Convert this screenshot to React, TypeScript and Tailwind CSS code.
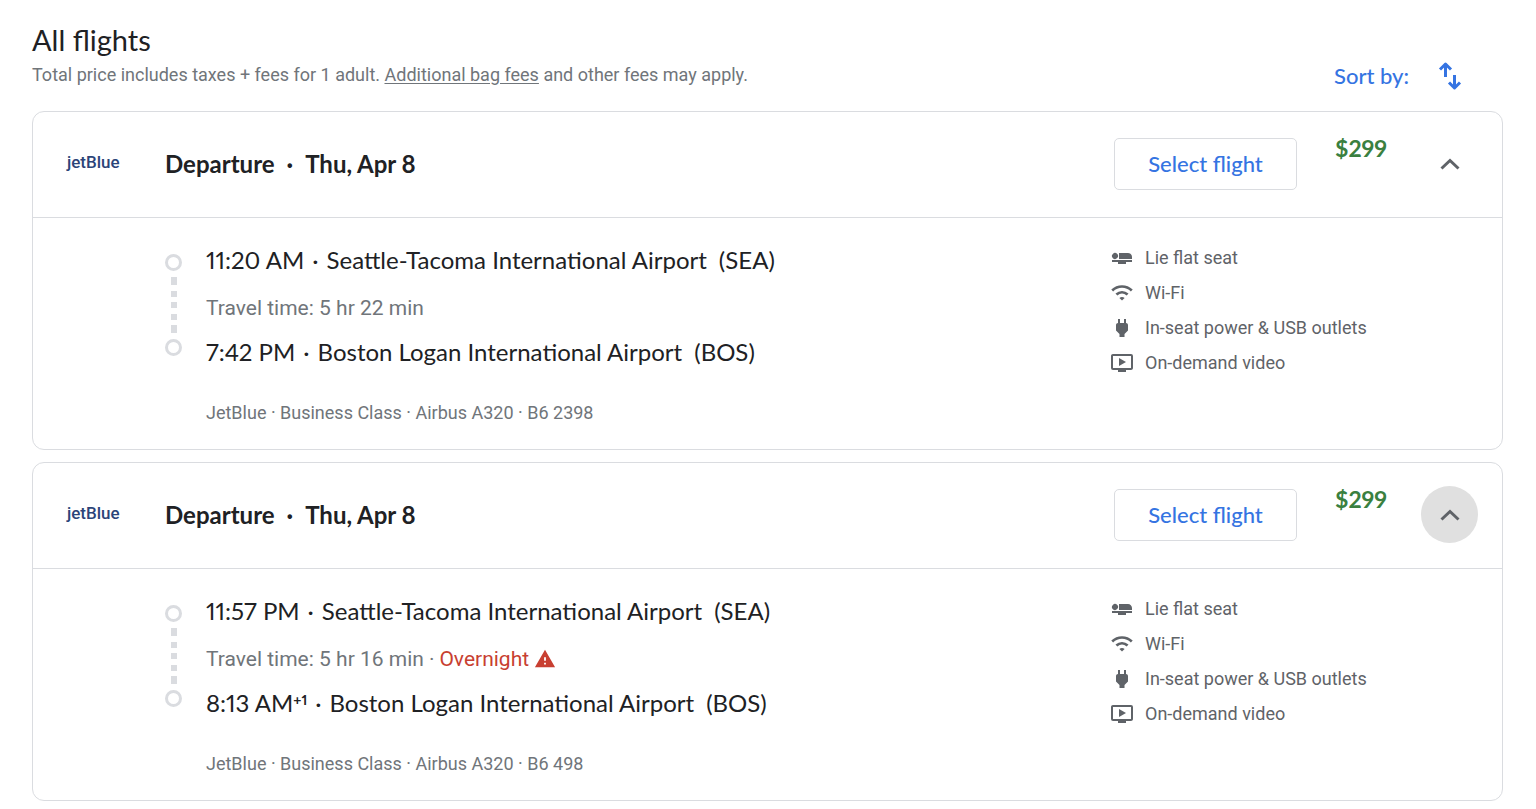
import { useState } from 'react';
import { MdAirlineSeatFlat, MdOndemandVideo, MdPower, MdWarning } from 'react-icons/md';

type Stop = {
  time: string;
  plusDays?: string;
  airport: string;
  code: string;
};

type Flight = {
  id: string;
  date: string;
  price: string;
  from: Stop;
  to: Stop;
  duration: string;
  overnight?: boolean;
  details: string;
};

const flights: Flight[] = [
  {
    id: 'b6-2398',
    date: 'Thu, Apr 8',
    price: '$299',
    from: { time: '11:20 AM', airport: 'Seattle-Tacoma International Airport', code: 'SEA' },
    to: { time: '7:42 PM', airport: 'Boston Logan International Airport', code: 'BOS' },
    duration: '5 hr 22 min',
    details: 'JetBlue · Business Class · Airbus A320 · B6 2398'
  },
  {
    id: 'b6-498',
    date: 'Thu, Apr 8',
    price: '$299',
    from: { time: '11:57 PM', airport: 'Seattle-Tacoma International Airport', code: 'SEA' },
    to: { time: '8:13 AM', plusDays: '+1', airport: 'Boston Logan International Airport', code: 'BOS' },
    duration: '5 hr 16 min',
    overnight: true,
    details: 'JetBlue · Business Class · Airbus A320 · B6 498'
  }
];

const amenities = [
  { icon: <MdAirlineSeatFlat size={24} />, label: 'Lie flat seat' },
  { icon: <WifiIcon />, label: 'Wi-Fi' },
  { icon: <MdPower size={24} />, label: 'In-seat power & USB outlets' },
  { icon: <MdOndemandVideo size={24} />, label: 'On-demand video' }
];

function WifiIcon() {
  return (
    <svg width="24" height="24" viewBox="0 0 24 24" fill="none" stroke="currentColor">
      <path d="M2.2 9.4C7.8 4.2 16.2 4.2 21.8 9.4" strokeWidth="2.7" />
      <path d="M6.4 13.6C9.7 10.6 14.3 10.6 17.6 13.6" strokeWidth="2.7" />
      <path d="M9.4 16.9C10.9 15.6 13.1 15.6 14.6 16.9L12 19.6Z" fill="currentColor" stroke="none" />
    </svg>
  );
}

function SortIcon() {
  return (
    <svg width="24" height="30" viewBox="0 0 24 30" fill="none" stroke="currentColor" strokeWidth="3">
      <path d="M7.5 16V3M2 8.5L7.5 3L13 8.5" strokeLinejoin="round" />
      <path d="M16.5 14V27M11 21.5L16.5 27L22 21.5" strokeLinejoin="round" />
    </svg>
  );
}

function ChevronIcon({ open }: { open: boolean }) {
  return (
    <svg
      width="20"
      height="12"
      viewBox="0 0 20 12"
      fill="none"
      stroke="currentColor"
      strokeWidth="3"
      className={open ? '' : 'rotate-180'}
    >
      <path d="M1.5 10.5L10 2.5L18.5 10.5" />
    </svg>
  );
}

function Timeline() {
  return (
    <div className="flex w-[17px] flex-col items-center" aria-hidden="true">
      <div className="size-[17px] rounded-full border-3 border-[#dadce0]" />
      <div className="flex h-[68px] flex-col items-center justify-between py-[6px]">
        <div className="h-2 w-[6px] bg-[#dadce0]" />
        <div className="h-[6px] w-[6px] bg-[#dadce0]" />
        <div className="h-[6px] w-[6px] bg-[#dadce0]" />
        <div className="h-[6px] w-[6px] bg-[#dadce0]" />
        <div className="h-2 w-[6px] bg-[#dadce0]" />
      </div>
      <div className="size-[17px] rounded-full border-3 border-[#dadce0]" />
    </div>
  );
}

function StopRow({ stop }: { stop: Stop }) {
  return (
    <p className="flex flex-wrap items-center gap-x-2 text-[24px] leading-8 text-[#202124] proportional-nums font-['Lato',sans-serif]">
      <span>
        {stop.time}
        {stop.plusDays && <sup className="text-[14px] font-bold">{stop.plusDays}</sup>}
      </span>
      <span>·</span>
      <span>{stop.airport}</span>
      <span className="pl-1">({stop.code})</span>
    </p>
  );
}

function FlightCard({ flight, highlighted }: { flight: Flight; highlighted: boolean }) {
  const [open, setOpen] = useState(true);

  return (
    <article className="rounded-xl border border-[#dadce0]">
      {/* Header */}
      <div className="flex min-h-[105px] items-center pr-6 pb-[2px] pl-[34px]">
        <span className="w-[98px] pb-[2px] text-[17px] font-medium text-[#2b4479]">jetBlue</span>
        <h2 className="flex flex-1 gap-3 text-[24px] leading-8 font-bold text-[#202124] proportional-nums font-['Lato',sans-serif]">
          <span>Departure</span>
          <span>·</span>
          <span>{flight.date}</span>
        </h2>
        <button
          type="button"
          className="h-[52px] w-[183px] rounded-[5px] border border-[#dadce0] text-[22px] font-medium text-[#3574e2] font-['Lato',sans-serif]"
        >
          Select flight
        </button>
        <span className="w-[124px] self-start pt-5 pl-[38px] text-[23px] leading-8 font-bold text-[#3a8040] proportional-nums font-['Lato',sans-serif]">
          {flight.price}
        </span>
        <button
          type="button"
          aria-expanded={open}
          aria-label="Flight details"
          onClick={() => setOpen(!open)}
          className={
            highlighted
              ? 'flex size-[57px] items-center justify-center rounded-full bg-[#e0e0e0] text-[#5f6368]'
              : 'flex size-[57px] items-center justify-center rounded-full text-[#5f6368]'
          }
        >
          <ChevronIcon open={open} />
        </button>
      </div>

      {/* Itinerary */}
      {open && (
        <div className="flex border-t border-[#dadce0] pt-[26px] pb-6 pl-[132px]">
          <div className="pt-[10px]">
            <Timeline />
          </div>
          <div className="flex-1 pl-6">
            <StopRow stop={flight.from} />
            <p className="flex items-center gap-[5px] pt-[18px] pb-[14px] text-[21px] leading-7 text-[#70757a]">
              <span>Travel time: {flight.duration}</span>
              {flight.overnight && (
                <>
                  <span>·</span>
                  <span className="text-[#c83f31]">Overnight</span>
                  <MdWarning size={22} className="text-[#c83f31]" />
                </>
              )}
            </p>
            <StopRow stop={flight.to} />
            <p className="pt-[33px] text-[18px] leading-6 text-[#70757a]">{flight.details}</p>
          </div>
          <ul className="flex w-[392px] flex-col gap-[11px] pt-[2px] text-[18px] leading-6 text-[#5f6368]">
            {amenities.map((amenity) => (
              <li key={amenity.label} className="flex items-center gap-[11px]">
                {amenity.icon}
                {amenity.label}
              </li>
            ))}
          </ul>
        </div>
      )}
    </article>
  );
}

export default function App() {
  return (
    <main className="bg-white pt-5 pr-[33px] pb-2 pl-8 font-['Roboto',sans-serif]">
      <header className="flex items-end justify-between pb-5">
        <div className="pb-[2px]">
          <h1 className="mb-px text-[29px] leading-10 text-[#202124] font-['Lato',sans-serif]">All flights</h1>
          <p className="text-[18px] leading-7 text-[#70757a]">
            Total price includes taxes + fees for 1 adult.{' '}
            <a href="#bag-fees" className="underline underline-offset-2">
              Additional bag fees
            </a>{' '}
            and other fees may apply.
          </p>
        </div>
        <button
          type="button"
          className="flex items-center gap-[29px] pr-[41px] text-[22px] leading-[30px] font-medium text-[#3574e2] font-['Lato',sans-serif]"
        >
          Sort by:
          <SortIcon />
        </button>
      </header>

      <div className="flex flex-col gap-3">
        {flights.map((flight, index) => (
          <FlightCard key={flight.id} flight={flight} highlighted={index === 1} />
        ))}
      </div>
    </main>
  );
}
